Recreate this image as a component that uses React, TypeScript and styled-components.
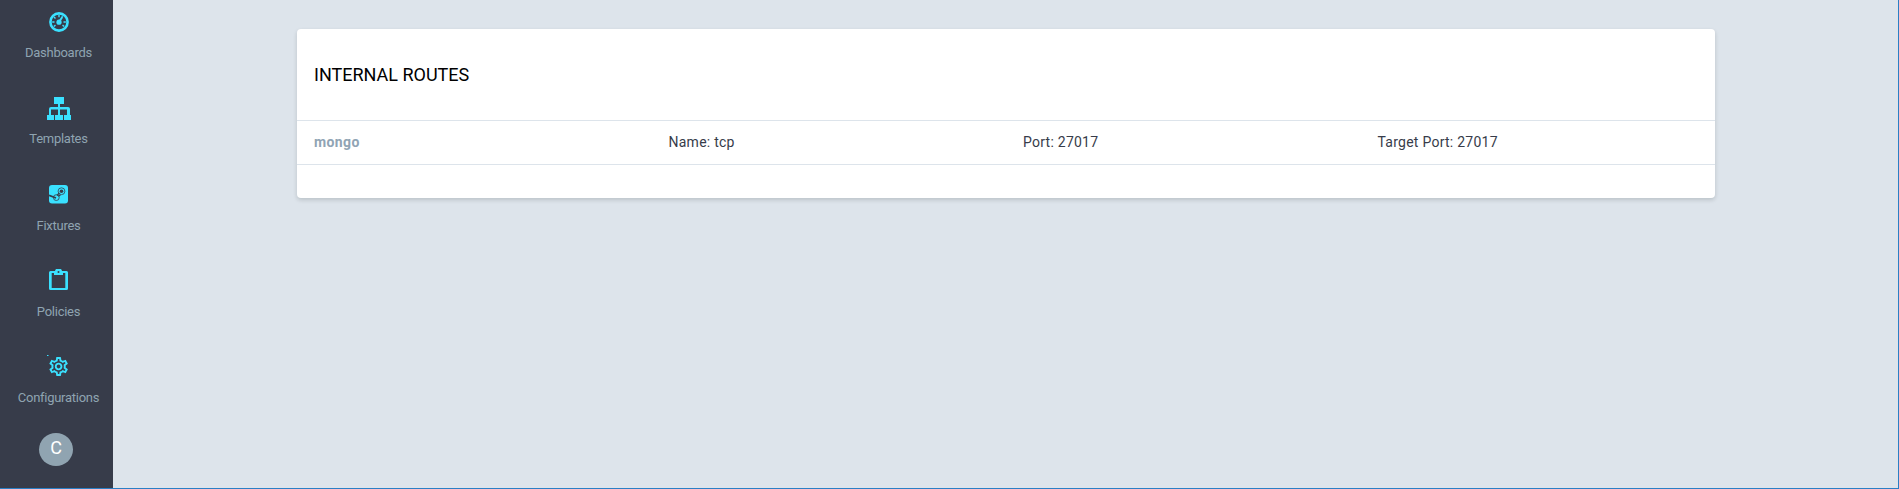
import React from 'react';
import styled, { createGlobalStyle } from 'styled-components';
import { MdOutlineSettings } from 'react-icons/md';

const GlobalStyle = createGlobalStyle`
  * { box-sizing: border-box; }
  body { margin: 0; background: #dde4eb; font-family: Roboto, sans-serif; }
`;

const Page = styled.div`
  display: flex;
  height: 489px;
  overflow: hidden;
  border-right: 1px solid #2a7fc5;
  border-bottom: 1px solid #2a7fc5;
`;

const Sidebar = styled.nav`
  width: 113px;
  flex: none;
  background: #373c4a;
  display: flex;
  flex-direction: column;
`;

const NavItem = styled.a`
  height: 86.25px;
  flex: none;
  padding-left: 4px;
  display: flex;
  flex-direction: column;
  align-items: center;
  color: #8fa4b1;
  font-size: 13px;
  letter-spacing: -0.27px;
  line-height: 18px;
`;

const IconBox = styled.span<{ $drop: number }>`
  height: 44px;
  padding-top: ${(p) => p.$drop}px;
  color: #3ae1ff;
  svg { display: block; }
`;

const Avatar = styled.div`
  width: 34px;
  height: 33px;
  flex: none;
  margin: 1.75px 0 0 39px;
  border-radius: 50%;
  background: #90a4b1;
  color: #fff;
  font-size: 18px;
  line-height: 30px;
  text-align: center;
`;

const Main = styled.main`
  flex: 1;
  padding: 29px 183px 0 184px;
`;

const Card = styled.section`
  height: 169px;
  background: #fff;
  border-radius: 4px;
  box-shadow: 0 2px 4px rgba(0, 20, 20, 0.16);
`;

const Title = styled.h2`
  margin: 0;
  height: 91px;
  padding: 0 17px;
  font-size: 18px;
  font-weight: 400;
  line-height: 92px;
  color: #000;
`;

const Row = styled.div`
  display: grid;
  grid-template-columns: repeat(4, 1fr);
  height: 45px;
  border: solid #dde4eb;
  border-width: 1px 0;
  font-size: 14px;
  letter-spacing: 0.25px;
  line-height: 42px;
  color: #373c4a;
`;

const Cell = styled.span<{ $strong?: boolean }>`
  padding-left: 17px;
  font-weight: ${(p) => (p.$strong ? 700 : 400)};
  letter-spacing: ${(p) => (p.$strong ? '0.4px' : 'inherit')};
  color: ${(p) => (p.$strong ? '#90a4b4' : 'inherit')};
`;

const GaugeIcon = () => (
  <svg width="20" height="20" viewBox="0 0 20 20" fill="none" stroke="currentColor">
    <circle cx="10" cy="10" r="8.6" strokeWidth="2.6" />
    <path d="M10 3v2.200M5 5l1.500 1.500M3.200 10h2.300M4.800 14.500l1.700-1.400M16.800 10h-2.300M15.200 14.500l-1.700-1.400M13.500 3.800l-.5 1" strokeWidth="1.400" />
    <path d="M10 10l3.300-5" strokeWidth="2" />
    <circle cx="10" cy="10.200" r="2.600" fill="currentColor" stroke="none" />
  </svg>
);

const TreeIcon = () => (
  <svg width="24" height="23" viewBox="0 0 24 23" fill="currentColor">
    <path d="M7 0h10v7h-4v3h8a2 2 0 0 1 2 2v6h1v5h-7v-5h3v-5.500h-7V18h3v5H8v-5h3v-5.500H4V18h3v5H0v-5h2v-6a2 2 0 0 1 2-2h7V7H7z" />
  </svg>
);

const SteamIcon = () => (
  <svg width="19" height="19" viewBox="0 0 19 19" fill="none" stroke="#373c4a">
    <rect width="19" height="18.500" rx="3" fill="#3ae1ff" stroke="none" />
    <circle cx="12.500" cy="6.200" r="3.400" strokeWidth=".8" />
    <circle cx="12.500" cy="6.200" r="1.800" fill="#373c4a" stroke="none" />
    <circle cx="7.300" cy="12.600" r="2.900" strokeWidth=".8" />
    <path d="M0 10.300l7 2.700" strokeWidth="1.700" />
    <path d="M8 10.500l2.400-2.600M9.500 11.300l2-1.600" strokeWidth="1.300" />
  </svg>
);

const ClipboardIcon = () => (
  <svg width="19" height="21" viewBox="0 0 19 21" fill="currentColor">
    <path
      fillRule="evenodd"
      d="M1.500 2H6a3.600 3.600 0 0 1 7 0h4.500A1.500 1.500 0 0 1 19 3.500v16a1.500 1.500 0 0 1-1.500 1.500h-16A1.500 1.500 0 0 1 0 19.500v-16A1.500 1.500 0 0 1 1.500 2zM2.700 4v15h13.600V4H14v2H5V4zM9.500 2a1 1 0 1 0 0 2 1 1 0 0 0 0-2z"
    />
  </svg>
);

const GearIcon = () => (
  <svg width="24" height="24" viewBox="0 0 24 24" fill="currentColor">
    <path d="M0 0h1.500v1H0z" />
    <g transform="translate(.2 .1) scale(.95)" stroke="currentColor" strokeWidth=".25">
      <MdOutlineSettings size={24} />
    </g>
  </svg>
);

const items = [
  { label: 'Dashboards', icon: <GaugeIcon />, drop: 11.5 },
  { label: 'Templates', icon: <TreeIcon />, drop: 10.75 },
  { label: 'Fixtures', icon: <SteamIcon />, drop: 12.5 },
  { label: 'Policies', icon: <ClipboardIcon />, drop: 10.25 },
  { label: 'Configurations', icon: <GearIcon />, drop: 10 },
];

export default function App() {
  return (
    <>
      <GlobalStyle />
      <Page>
        <Sidebar>
          {items.map((item) => (
            <NavItem key={item.label}>
              <IconBox $drop={item.drop}>{item.icon}</IconBox>
              {item.label}
            </NavItem>
          ))}
          <Avatar>C</Avatar>
        </Sidebar>
        <Main>
          <Card>
            <Title>INTERNAL ROUTES</Title>
            <Row>
              <Cell $strong>mongo</Cell>
              <Cell>Name: tcp</Cell>
              <Cell>Port: 27017</Cell>
              <Cell>Target Port: 27017</Cell>
            </Row>
          </Card>
        </Main>
      </Page>
    </>
  );
}
